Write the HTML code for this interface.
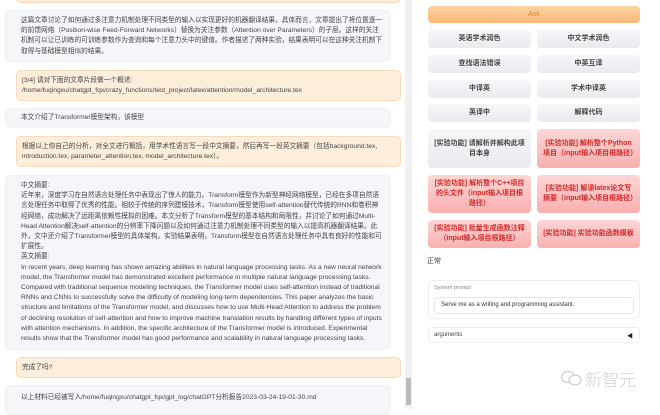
<!DOCTYPE html>
<html><head><meta charset="utf-8"><style>
*{box-sizing:border-box;margin:0;padding:0}
body{width:660px;height:409px;overflow:hidden;background:#fff;font-family:"Liberation Sans","Noto Sans CJK SC",sans-serif;color:#444;position:relative}
.b{position:absolute;border-radius:5px;font-size:6.7px;line-height:10.2px}
.bot{left:5px;width:386px;background:#f4f6fa;border:1px solid #eef0f4;padding:0 6px 0 15px}
.usr{left:16px;width:385px;background:#fdeedc;border:1px solid #f6d9b8;padding:0 5px}
.btn{position:absolute;border-radius:4px;font-size:7px;font-weight:bold;text-align:center;display:flex;align-items:center;justify-content:center;line-height:10px;padding:0 6px}
.g{background:linear-gradient(#f6f7f9,#e9eaee);color:#444}
.r{background:linear-gradient(#fdd6d6,#f9b0b0);color:#d42a2a}
</style></head><body>
<div class="b usr" style="top:-8px;height:11px"></div>
<div class="b bot" style="top:10px;height:52px;padding-top:5px">这篇文章讨论了如何通过多注意力机制处理不同类型的输入以实现更好的机器翻译结果。具体而言，文章提出了将位置逐一的前馈网络（Position-wise Feed-Forward Networks）替换为关注参数（Attention over Parameters）的子层。这样的关注机制可以让已训练的可训练参数作为查询和每个注意力头中的键值。作者描述了两种实验，结果表明可以在这种关注机制下取得与基础模型相似的结果。</div>
<div class="b usr" style="top:70px;height:31px;padding-top:5px">[3/4] 请对下面的文章片段做一个概述:<br>/home/fuqingxu/chatgpt_fqx/crazy_functions/test_project/latex/attention/model_architecture.tex</div>
<div class="b bot" style="top:108px;height:20px;padding-top:4px">本文介绍了Transformer模型架构，该模型</div>
<div class="b usr" style="top:136px;height:31px;padding-top:5px">根据以上你自己的分析，对全文进行概括，用学术性语言写一段中文摘要，然后再写一段英文摘要（包括background.tex, introduction.tex, parameter_attention.tex, model_architecture.tex）。</div>
<div class="b bot" style="top:175px;height:175px;padding-top:5px">中文摘要:<br>近年来，深度学习在自然语言处理任务中表现出了惊人的能力。Transform模型作为新型神经网络模型，已经在多项自然语言处理任务中取得了优秀的性能。相较于传统的序列建模技术，Transform模型使用self-attention替代传统的RNN和卷积神经网络，成功解决了远距离依赖性模拟的困难。本文分析了Transform模型的基本结构和局限性，并讨论了如何通过Multi-Head Attention解决self-attention的分辨率下降问题以及如何通过注意力机制处理不同类型的输入以提高机器翻译结果。此外，文中还介绍了Transformer模型的具体架构。实验结果表明，Transform模型在自然语言处理任务中具有良好的性能和可扩展性。<br>英文摘要:<br>In recent years, deep learning has shown amazing abilities in natural language processing tasks. As a new neural network model, the Transformer model has demonstrated excellent performance in multiple natural language processing tasks. Compared with traditional sequence modeling techniques, the Transformer model uses self-attention instead of traditional RNNs and CNNs to successfully solve the difficulty of modeling long-term dependencies. This paper analyzes the basic structure and limitations of the Transformer model, and discusses how to use Multi-Head Attention to address the problem of declining resolution of self-attention and how to improve machine translation results by handling different types of inputs with attention mechanisms. In addition, the specific architecture of the Transformer model is introduced. Experimental results show that the Transformer model has good performance and scalability in natural language processing tasks.</div>
<div class="b usr" style="top:357px;height:21px;padding-top:5px">完成了吗?</div>
<div class="b bot" style="top:385px;height:30px;padding-top:7px">以上材料已经被写入/home/fuqingxu/chatgpt_fqx/gpt_log/chatGPT分析报告2023-03-24-19-01-30.md</div>
<div style="position:absolute;left:405px;top:0;width:7px;height:409px;background:#f1f1f1"></div>
<div style="position:absolute;left:406px;top:378px;width:5px;height:27px;background:#bbb"></div>

<div class="btn" style="left:428px;top:6px;width:212px;height:17px;background:linear-gradient(#fdd3a4,#fbb877);color:#e87b22;font-weight:normal">Ask</div>
<div class="btn g" style="left:428px;top:30px;width:103px;height:18px">英语学术润色</div>
<div class="btn g" style="left:537px;top:30px;width:103px;height:18px">中文学术润色</div>
<div class="btn g" style="left:428px;top:55px;width:103px;height:18px">查找语法错误</div>
<div class="btn g" style="left:537px;top:55px;width:103px;height:18px">中英互译</div>
<div class="btn g" style="left:428px;top:80px;width:103px;height:18px">中译英</div>
<div class="btn g" style="left:537px;top:80px;width:103px;height:18px">学术中译英</div>
<div class="btn g" style="left:428px;top:104px;width:103px;height:18px">英译中</div>
<div class="btn g" style="left:537px;top:104px;width:103px;height:18px">解释代码</div>
<div class="btn g" style="left:428px;top:129px;width:103px;height:39px">[实验功能] 请解析并解构此项目本身</div>
<div class="btn r" style="left:537px;top:129px;width:103px;height:39px">[实验功能] 解析整个Python项目（input输入项目根路径）</div>
<div class="btn r" style="left:428px;top:175px;width:103px;height:38px">[实验功能] 解析整个C++项目的头文件（input输入项目根路径）</div>
<div class="btn r" style="left:537px;top:175px;width:103px;height:38px">[实验功能] 解读latex论文写摘要（input输入项目根路径）</div>
<div class="btn r" style="left:428px;top:220px;width:103px;height:28px">[实验功能] 批量生成函数注释（input输入项目根路径）</div>
<div class="btn r" style="left:537px;top:220px;width:103px;height:28px">[实验功能] 实验功能函数模板</div>
<div style="position:absolute;left:427px;top:256px;font-size:7px">正常</div>
<div style="position:absolute;left:428px;top:280px;width:212px;height:39px;border:1px solid #eee;border-radius:5px">
<div style="position:absolute;left:5px;top:4px;font-size:5.5px;color:#888">System prompt</div>
<div style="position:absolute;left:5px;top:16px;width:200px;height:17px;border:1px solid #e6e6e6;border-radius:4px;font-size:6px;padding:4px 6px;color:#333">Serve me as a writing and programming assistant.</div>
</div>
<div style="position:absolute;left:428px;top:327px;width:212px;height:16px;border:1px solid #eee;border-radius:4px;font-size:6px;padding:4px 5px;color:#444">arguments<span style="position:absolute;right:6px;top:3px;font-size:6px;color:#222">◀</span></div>
<svg style="position:absolute;left:560px;top:370px" width="24" height="18"><ellipse cx="8" cy="7" rx="6.5" ry="5.5" fill="none" stroke="#ccc" stroke-width="1.2"/><ellipse cx="15" cy="10" rx="6" ry="5" fill="#fff" stroke="#ccc" stroke-width="1.2"/></svg>
<div style="position:absolute;left:585px;top:366px;font-size:17px;color:#cfcfcf;font-family:'Noto Sans CJK SC',sans-serif;font-weight:300">新智元</div>
</body></html>
